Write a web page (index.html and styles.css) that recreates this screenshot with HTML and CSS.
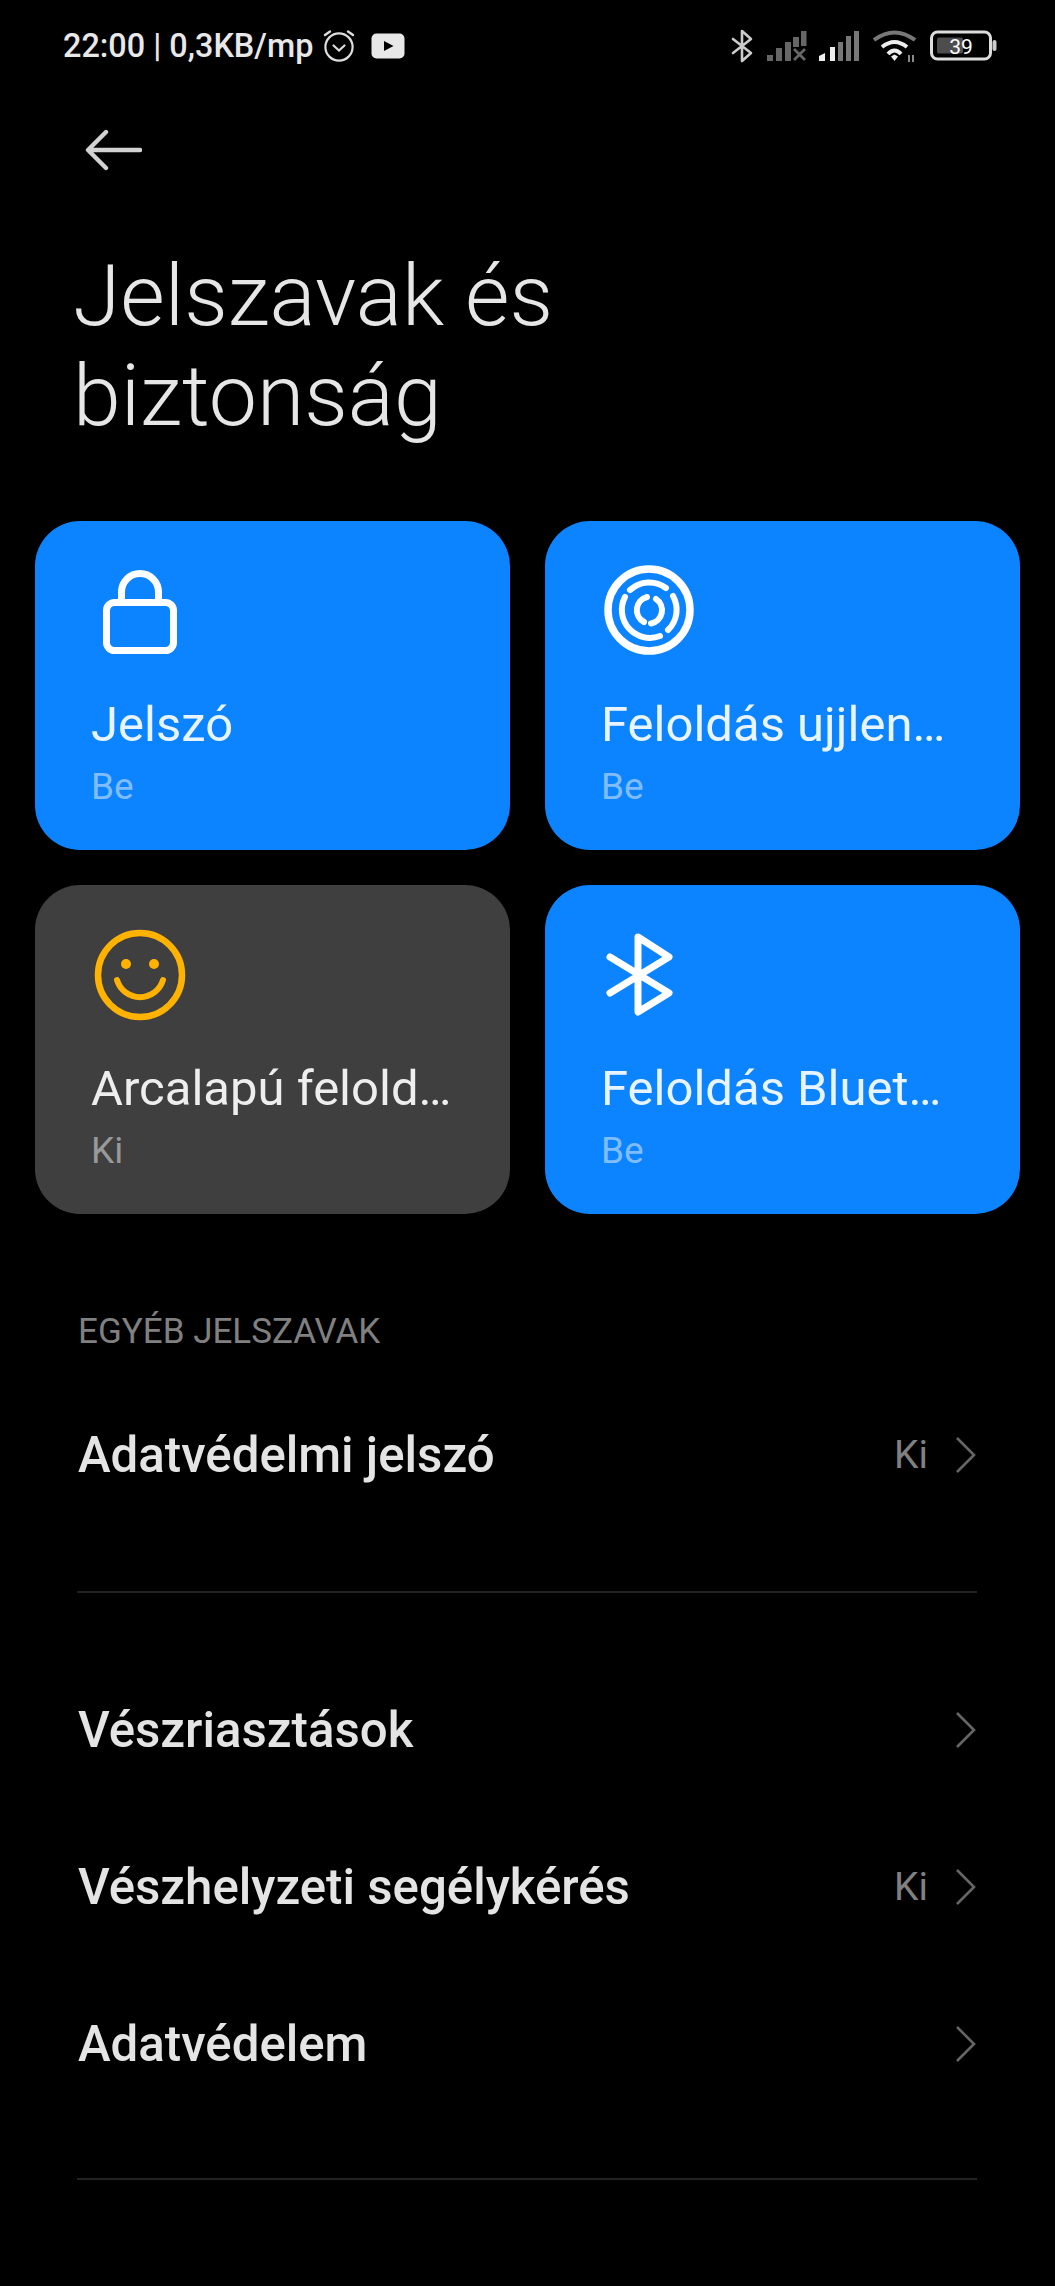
FILE: index.html
```html
<!DOCTYPE html>
<html lang="hu">
<head>
    <meta charset="UTF-8">
    <meta name="viewport" content="width=device-width, initial-scale=1.0">
    <title>Jelszavak és biztonság</title>
    <link rel="stylesheet" href="styles.css">
</head>
<body>
    <!-- Status bar -->
    <div class="status">
      <div class="status-left">
        <span class="status-text">22:00 | 0,3KB/mp</span>
        <svg class="ic-alarm" width="34" height="34" viewBox="0 0 34 34" fill="none" stroke="#ddd" stroke-linecap="round">
          <circle cx="17" cy="19" r="13.6" stroke-width="2.2"/>
          <path d="M3 7 L8 3.5 M31 7 L26 3.5" stroke-width="2.4"/>
          <path d="M11.5 17.5 L17 22.5 L22.5 17.5" stroke-width="2.2"/>
        </svg>
        <svg class="ic-yt" width="34" height="26" viewBox="0 0 34 26">
          <rect x="0.5" y="0.5" width="33" height="25" rx="5" fill="#e8e8e8"/>
          <path d="M13 8 L22.5 13 L13 18 Z" fill="#000"/>
        </svg>
      </div>
      <div class="status-right">
        <svg class="ic-bt" width="22" height="34" viewBox="0 0 22 34" fill="none" stroke="#ccc" stroke-width="2.6" stroke-linecap="round" stroke-linejoin="round">
          <path d="M2 10 L20 24 L11 32 V2 L20 10 L2 24"/>
        </svg>
        <svg class="ic-sig1" width="40" height="30" viewBox="0 0 40 30">
          <rect x="0" y="24" width="6" height="6" fill="#666"/>
          <rect x="9" y="17" width="6" height="13" fill="#666"/>
          <rect x="18" y="11" width="6" height="19" fill="#666"/>
          <rect x="26" y="6" width="6" height="10" fill="#666"/>
          <rect x="34" y="0" width="5.5" height="15" fill="#666"/>
          <path d="M27 18 L38 29 M38 18 L27 29" stroke="#666" stroke-width="2.8"/>
        </svg>
        <svg class="ic-sig2" width="40" height="30" viewBox="0 0 40 30">
          <path d="M0 30 V25 L6 22 V30 Z" fill="#eee"/>
          <rect x="11" y="16" width="5" height="14" fill="#eee"/>
          <rect x="19" y="11" width="5" height="19" fill="#777"/>
          <rect x="27" y="5" width="5" height="25" fill="#777"/>
          <rect x="35" y="0" width="5" height="30" fill="#777"/>
        </svg>
        <svg class="ic-wifi" width="43" height="32" viewBox="0 0 43 32" fill="none">
          <path d="M1 10 Q21.5 -5 42 10" stroke="#777" stroke-width="4"/>
          <path d="M9 17 Q21.5 7 34 17" stroke="#eee" stroke-width="4"/>
          <path d="M15 24 Q21.5 17 28 24" stroke="#eee" stroke-width="4"/>
          <path d="M18 26.5 L21.5 24.5 L25 26.5 L21.5 31 Z" fill="#eee"/>
          <path d="M36 25 V32 M40 25 V32" stroke="#999" stroke-width="1.8"/>
        </svg>
        <svg class="ic-bat" width="68" height="32" viewBox="0 0 68 32">
          <rect x="1.5" y="2" width="59" height="27" rx="6" fill="none" stroke="#ddd" stroke-width="3"/>
          <rect x="7" y="7.5" width="26" height="16" rx="2" fill="#4d4d4d"/>
          <rect x="62.5" y="10" width="4" height="11" rx="2" fill="#ccc"/>
          <text class="bat-text" x="31" y="23.5" text-anchor="middle">39</text>
        </svg>
      </div>
    </div>

    <div class="nav">
      <svg width="58" height="42" viewBox="0 0 58 42" fill="none" stroke="#d2d2d2" stroke-width="4.4" stroke-linecap="round" stroke-linejoin="round">
        <path d="M56 21 H5 M22 3 L4 21 L22 39"/>
      </svg>
    </div>

    <h1 class="title">Jelszavak és<br>biztonság</h1>

    <div class="cards">
      <div class="card">
        <svg class="card-icon" width="100" height="100" viewBox="0 0 100 100" fill="none" stroke="#fff" stroke-width="7">
          <rect x="16.5" y="41.5" width="67" height="48" rx="8"/>
          <path d="M31.5 41 V31 A18.5 18.5 0 0 1 68.5 31 V41"/>
        </svg>
        <div class="card-title">Jelszó</div>
        <div class="card-sub">Be</div>
      </div>
      <div class="card">
        <svg class="card-icon" width="100" height="100" viewBox="1 1 100 100" fill="none" stroke="#fff" stroke-linecap="round">
          <circle cx="50" cy="50" r="41" stroke-width="7.5"/>
          <g stroke-width="6" transform="translate(50 50)">
            <path d="M-19 -20 A28 28 0 0 1 17 -22"/>
            <path d="M24 -14 A28 28 0 0 1 19 20"/>
            <path d="M11 26 A28 28 0 0 1 -24 -13"/>
            <path d="M-2 -13 A13.5 13.5 0 0 0 -5 12"/>
            <path d="M7 -11 A13.5 13.5 0 0 1 2 13.5"/>
          </g>
        </svg>
        <div class="card-title">Feloldás ujjlen…</div>
        <div class="card-sub">Be</div>
      </div>
      <div class="card card-off">
        <svg class="card-icon" width="100" height="100" viewBox="0 0 100 100" fill="none" stroke="#ffb300" stroke-linecap="round">
          <circle cx="50" cy="50" r="42" stroke-width="6.5"/>
          <circle cx="36" cy="39" r="5" fill="#ffb300" stroke="none"/>
          <circle cx="64" cy="39" r="5" fill="#ffb300" stroke="none"/>
          <path d="M27 55 A24 24 0 0 0 73 55" stroke-width="6"/>
        </svg>
        <div class="card-title">Arcalapú felold…</div>
        <div class="card-sub">Ki</div>
      </div>
      <div class="card">
        <svg class="card-icon" width="100" height="100" viewBox="0 0 100 100" fill="none" stroke="#fff" stroke-width="7" stroke-linecap="round" stroke-linejoin="round">
          <path d="M10 32 L69 68 L38 87 V12 L69 32 L10 68"/>
        </svg>
        <div class="card-title">Feloldás Bluet…</div>
        <div class="card-sub">Be</div>
      </div>
    </div>

    <div class="section-label">EGYÉB JELSZAVAK</div>

    <div class="row">
      <span class="row-title">Adatvédelmi jelszó</span>
      <span class="row-value">Ki</span>
      <svg class="chev" width="22" height="36" viewBox="0 0 22 36" fill="none" stroke="#666" stroke-width="2.6"><path d="M2 1 L19 18 L2 35"/></svg>
    </div>
    <div class="sep sep-a"></div>

    <div class="row">
      <span class="row-title">Vészriasztások</span>
      <svg class="chev" width="22" height="36" viewBox="0 0 22 36" fill="none" stroke="#666" stroke-width="2.6"><path d="M2 1 L19 18 L2 35"/></svg>
    </div>
    <div class="row">
      <span class="row-title">Vészhelyzeti segélykérés</span>
      <span class="row-value">Ki</span>
      <svg class="chev" width="22" height="36" viewBox="0 0 22 36" fill="none" stroke="#666" stroke-width="2.6"><path d="M2 1 L19 18 L2 35"/></svg>
    </div>
    <div class="row">
      <span class="row-title">Adatvédelem</span>
      <svg class="chev" width="22" height="36" viewBox="0 0 22 36" fill="none" stroke="#666" stroke-width="2.6"><path d="M2 1 L19 18 L2 35"/></svg>
    </div>
    <div class="sep sep-b"></div>
</body>
</html>
```

FILE: styles.css
```css
body{
  margin: 0;
  background-color: #000;
  font-family: Roboto, "Noto Sans", sans-serif;
  color: #e6e6e6;
}

/* status bar */
.status{
  height: 92px;
  padding: 0 57px 0 63px;
  display: flex;
  align-items: center;
  justify-content: space-between;
}

.status-left{
  display: flex;
  align-items: center;
}

.status-text{
  font-size: 32.4px;
  font-weight: 500;
  color: #e8e8e8;
}

.ic-alarm{
  margin-left: 9px;
  margin-top: -2px;
}

.ic-yt{
  margin-left: 15px;
}

.status-right{
  display: flex;
  align-items: center;
}

.ic-sig1{
  margin-left: 14px;
}

.ic-sig2{
  margin-left: 12px;
}

.ic-wifi{
  margin-left: 14px;
}

.ic-bat{
  margin-left: 14px;
}

.bat-text{
  font-size: 21px;
  fill: #fff;
}

/* back arrow */
.nav{
  height: 116px;
  padding-left: 84px;
  display: flex;
  align-items: center;
}

.title{
  margin: 38px 0 75px 73px;
  font-size: 86px;
  line-height: 100px;
  font-weight: 300;
  color: #e6e6e6;
}

/* cards */
.cards{
  margin: 0 35px;
  display: grid;
  grid-template-columns: 475px 475px;
  column-gap: 35px;
  row-gap: 35px;
}

.card{
  padding: 40px 20px 41px 56px;
  background-color: #0d84ff;
  border-radius: 45px;
  color: #e8f4ff;
}

.card-off{
  background-color: #3f3f3f;
  color: #eee;
}

.card-icon{
  display: block;
  margin-left: -1px;
}

.card-title{
  margin-top: 34px;
  font-size: 49px;
  line-height: 60px;
  white-space: nowrap;
}

.card-sub{
  margin-top: 10px;
  font-size: 37px;
  line-height: 44px;
  color: #7fbdff;
}

.card-off .card-sub{
  color: #999;
}

/* list */
.section-label{
  margin: 98px 78px 24px;
  font-size: 35px;
  line-height: 40px;
  color: #808080;
}

.row{
  height: 157px;
  margin: 0 78px;
  display: flex;
  align-items: center;
}

.row-title{
  flex: 1;
  font-size: 49.2px;
  font-weight: 500;
  color: #e4e4e4;
}

.row-value{
  font-size: 39px;
  color: #808080;
  margin-right: 27px;
}

.chev{
  display: block;
}

.sep{
  height: 2px;
  margin: 0 78px 0 77px;
  background-color: #222;
}

.sep-a{
  margin-top: 58px;
  margin-bottom: 58px;
}

.sep-b{
  margin-top: 56px;
}
```
